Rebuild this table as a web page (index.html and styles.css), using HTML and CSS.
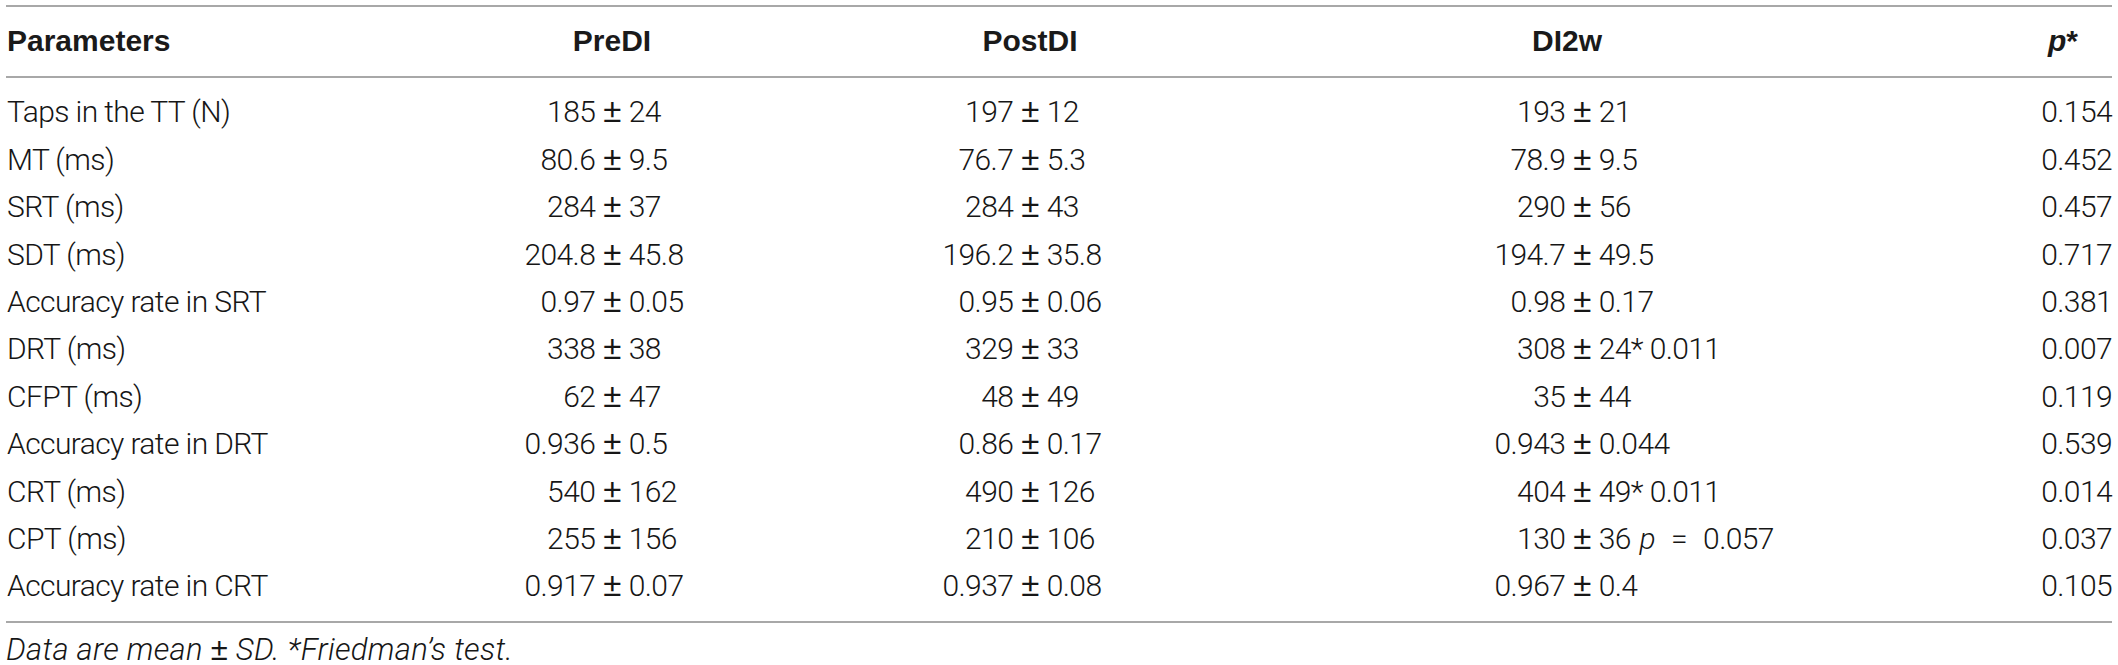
FILE: index.html
```html
<!DOCTYPE html>
<html lang="en">
<head>
<meta charset="utf-8">
<title>Table</title>
<link rel="stylesheet" href="styles.css">
</head>
<body>
<div class="wrap">
  <table class="data">
    <colgroup>
      <col class="c-param">
      <col class="c-pre">
      <col class="c-post">
      <col class="c-di2w">
      <col class="c-p">
    </colgroup>
    <thead>
      <tr>
        <th class="h-param">Parameters</th>
        <th class="h-pre">PreDI</th>
        <th class="h-post">PostDI</th>
        <th class="h-di2w">DI2w</th>
        <th class="h-p"><i>p</i>*</th>
      </tr>
    </thead>
    <tbody>
      <tr>
        <td class="param">Taps in the TT (N)</td>
        <td><div class="pm"><span class="l">185</span><span class="s">±</span><span class="r">24</span></div></td>
        <td><div class="pm"><span class="l">197</span><span class="s">±</span><span class="r">12</span></div></td>
        <td><div class="pm"><span class="l">193</span><span class="s">±</span><span class="r">21</span></div></td>
        <td class="pv">0.154</td>
      </tr>
      <tr>
        <td class="param">MT (ms)</td>
        <td><div class="pm"><span class="l">80.6</span><span class="s">±</span><span class="r">9.5</span></div></td>
        <td><div class="pm"><span class="l">76.7</span><span class="s">±</span><span class="r">5.3</span></div></td>
        <td><div class="pm"><span class="l">78.9</span><span class="s">±</span><span class="r">9.5</span></div></td>
        <td class="pv">0.452</td>
      </tr>
      <tr>
        <td class="param">SRT (ms)</td>
        <td><div class="pm"><span class="l">284</span><span class="s">±</span><span class="r">37</span></div></td>
        <td><div class="pm"><span class="l">284</span><span class="s">±</span><span class="r">43</span></div></td>
        <td><div class="pm"><span class="l">290</span><span class="s">±</span><span class="r">56</span></div></td>
        <td class="pv">0.457</td>
      </tr>
      <tr>
        <td class="param">SDT (ms)</td>
        <td><div class="pm"><span class="l">204.8</span><span class="s">±</span><span class="r">45.8</span></div></td>
        <td><div class="pm"><span class="l">196.2</span><span class="s">±</span><span class="r">35.8</span></div></td>
        <td><div class="pm"><span class="l">194.7</span><span class="s">±</span><span class="r">49.5</span></div></td>
        <td class="pv">0.717</td>
      </tr>
      <tr>
        <td class="param">Accuracy rate in SRT</td>
        <td><div class="pm"><span class="l">0.97</span><span class="s">±</span><span class="r">0.05</span></div></td>
        <td><div class="pm"><span class="l">0.95</span><span class="s">±</span><span class="r">0.06</span></div></td>
        <td><div class="pm"><span class="l">0.98</span><span class="s">±</span><span class="r">0.17</span></div></td>
        <td class="pv">0.381</td>
      </tr>
      <tr>
        <td class="param">DRT (ms)</td>
        <td><div class="pm"><span class="l">338</span><span class="s">±</span><span class="r">38</span></div></td>
        <td><div class="pm"><span class="l">329</span><span class="s">±</span><span class="r">33</span></div></td>
        <td><div class="pm"><span class="l">308</span><span class="s">±</span><span class="r">24* 0.011</span></div></td>
        <td class="pv">0.007</td>
      </tr>
      <tr>
        <td class="param">CFPT (ms)</td>
        <td><div class="pm"><span class="l">62</span><span class="s">±</span><span class="r">47</span></div></td>
        <td><div class="pm"><span class="l">48</span><span class="s">±</span><span class="r">49</span></div></td>
        <td><div class="pm"><span class="l">35</span><span class="s">±</span><span class="r">44</span></div></td>
        <td class="pv">0.119</td>
      </tr>
      <tr>
        <td class="param">Accuracy rate in DRT</td>
        <td><div class="pm"><span class="l">0.936</span><span class="s">±</span><span class="r">0.5</span></div></td>
        <td><div class="pm"><span class="l">0.86</span><span class="s">±</span><span class="r">0.17</span></div></td>
        <td><div class="pm"><span class="l">0.943</span><span class="s">±</span><span class="r">0.044</span></div></td>
        <td class="pv">0.539</td>
      </tr>
      <tr>
        <td class="param">CRT (ms)</td>
        <td><div class="pm"><span class="l">540</span><span class="s">±</span><span class="r">162</span></div></td>
        <td><div class="pm"><span class="l">490</span><span class="s">±</span><span class="r">126</span></div></td>
        <td><div class="pm"><span class="l">404</span><span class="s">±</span><span class="r">49* 0.011</span></div></td>
        <td class="pv">0.014</td>
      </tr>
      <tr>
        <td class="param">CPT (ms)</td>
        <td><div class="pm"><span class="l">255</span><span class="s">±</span><span class="r">156</span></div></td>
        <td><div class="pm"><span class="l">210</span><span class="s">±</span><span class="r">106</span></div></td>
        <td><div class="pm"><span class="l">130</span><span class="s">±</span><span class="r">36 <i class="pi">p</i><span class="eq">=</span>0.057</span></div></td>
        <td class="pv">0.037</td>
      </tr>
      <tr>
        <td class="param">Accuracy rate in CRT</td>
        <td><div class="pm"><span class="l">0.917</span><span class="s">±</span><span class="r">0.07</span></div></td>
        <td><div class="pm"><span class="l">0.937</span><span class="s">±</span><span class="r">0.08</span></div></td>
        <td><div class="pm"><span class="l">0.967</span><span class="s">±</span><span class="r">0.4</span></div></td>
        <td class="pv">0.105</td>
      </tr>
    </tbody>
  </table>
  <p class="note">Data are mean <span class="pmn">±</span> SD. *Friedman’s test.</p>
</div>
</body>
</html>
```

FILE: styles.css
```css
html, body {
  margin: 0;
  padding: 0;
  background: #ffffff;
}

.wrap {
  padding: 5px 6px 0 6px;
  color: #161616;
  font-family: "Roboto", "Liberation Sans", Arial, sans-serif;
}

.data {
  width: 2106px;
  table-layout: fixed;
  border-collapse: collapse;
  border-top: 2px solid #a8a8a8;
  border-bottom: 2px solid #a8a8a8;
}

.c-param { width: 394px; }
.c-pre { width: 424px; }
.c-post { width: 412px; }
.c-di2w { width: 692px; }
.c-p { width: 184px; }

.data th {
  font-family: "Liberation Sans", Arial, sans-serif;
  font-weight: bold;
  font-size: 30px;
  line-height: 47.4px;
  padding: 10px 0 12px 0;
  text-align: center;
  border-bottom: 2px solid #a8a8a8;
  color: #1a1a1a;
}

.data th.h-param {
  text-align: left;
  padding-left: 1px;
}

.data th.h-di2w {
  padding-right: 30px;
}

.data th.h-p {
  text-align: right;
  padding-right: 34px;
}

.data td {
  font-size: 30px;
  font-weight: 300;
  line-height: 47.4px;
  padding: 0;
  letter-spacing: -0.6px;
  white-space: nowrap;
}

.data tbody tr:first-child td {
  padding-top: 10px;
}

.data tbody tr:last-child td {
  padding-bottom: 11px;
}

.data td.param {
  text-align: left;
  padding-left: 1px;
}

.data td.pv {
  text-align: right;
}

.pm {
  display: grid;
  grid-template-columns: 1fr auto 1fr;
  align-items: baseline;
  height: 47.4px;
}

.pm .l {
  text-align: right;
}

.pm .s {
  font-family: "Liberation Sans", Arial, sans-serif;
  font-weight: normal;
  font-size: 33px;
  line-height: 38px;
  margin: 0 8px 0 8px;
}

.pm .r {
  text-align: left;
}

.pi {
  margin-left: 2px;
}

.eq {
  margin: 0 16px;
}

.note {
  margin: 0;
  padding-top: 10px;
  font-size: 31px;
  line-height: 34px;
  font-style: italic;
  font-weight: 300;
  letter-spacing: 0.3px;
}

.pmn {
  font-family: "Liberation Sans", Arial, sans-serif;
  font-style: normal;
}
```
